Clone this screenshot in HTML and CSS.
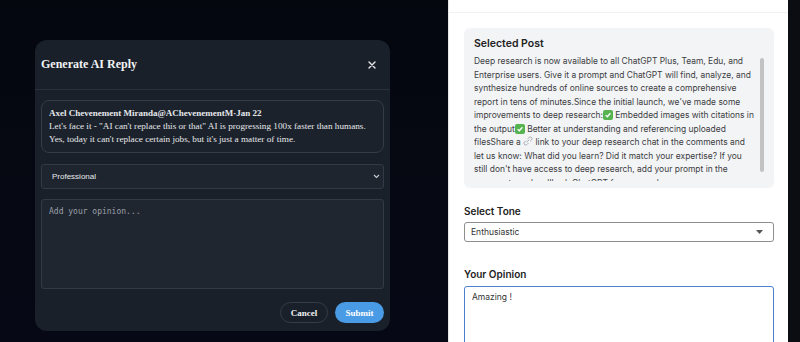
FILE: index.html
```html
<!DOCTYPE html>
<html lang="en">
<head>
<meta charset="utf-8">
<title>Generate AI Reply</title>
<link rel="stylesheet" href="styles.css">
</head>
<body>
<div class="page">
  <div class="backdrop">
    <div class="modal">
      <div class="modal-header">
        <h2 class="modal-title">Generate AI Reply</h2>
        <button class="close-btn" aria-label="Close">
          <svg width="8" height="8" viewBox="0 0 8 8"><path d="M1 1L7 7M7 1L1 7" stroke="#e8eaed" stroke-width="1.4" stroke-linecap="round"/></svg>
        </button>
      </div>
      <div class="modal-body">
        <div class="tweet">
          <div class="tweet-meta">Axel Chevenement Miranda@AChevenementM·Jan 22</div>
          <p class="tweet-text">Let's face it - "AI can't replace this or that" AI is progressing 100x faster than humans. Yes, today it can't replace certain jobs, but it's just a matter of time.</p>
        </div>
        <div class="dark-select">
          <span>Professional</span>
          <svg width="7" height="5" viewBox="0 0 7 5"><path d="M1 1L3.5 3.5L6 1" fill="none" stroke="#c9ccd1" stroke-width="1.1"/></svg>
        </div>
        <div class="dark-textarea">Add your opinion...</div>
        <div class="actions">
          <button class="btn btn-cancel">Cancel</button>
          <button class="btn btn-submit">Submit</button>
        </div>
      </div>
    </div>
  </div>
  <aside class="panel">
    <div class="panel-top"></div>
    <section class="post-card">
      <h3 class="post-title">Selected Post</h3>
      <div class="post-body">
        <div class="post-text">Deep research is now available to all ChatGPT Plus, Team, Edu, and<br>Enterprise users. Give it a prompt and ChatGPT will find, analyze, and<br>synthesize hundreds of online sources to create a comprehensive<br>report in tens of minutes.Since the initial launch, we've made some<br>improvements to deep research:<span class="check"><svg width="8" height="8" viewBox="0 0 8 8"><path d="M1.6 4.1L3.3 5.7L6.4 2.2" fill="none" stroke="#fff" stroke-width="1.3"/></svg></span> Embedded images with citations in<br>the output<span class="check"><svg width="8" height="8" viewBox="0 0 8 8"><path d="M1.6 4.1L3.3 5.7L6.4 2.2" fill="none" stroke="#fff" stroke-width="1.3"/></svg></span> Better at understanding and referencing uploaded<br>filesShare a <svg class="link" width="10" height="10" viewBox="0 0 10 10"><path d="M4 6L6 4M4.8 2.7L6 1.5a1.7 1.7 0 0 1 2.5 2.5L7.3 5.2M5.2 7.3L4 8.5a1.7 1.7 0 0 1-2.5-2.5L2.7 4.8" fill="none" stroke="#a0a4aa" stroke-width="0.9" stroke-linecap="round"/></svg> link to your deep research chat in the comments and<br>let us know: What did you learn? Did it match your expertise? If you<br>still don't have access to deep research, add your prompt in the<br>comments and we'll ask ChatGPT for you — plus more.</div>
        <div class="scroll-track"><div class="scroll-thumb"></div></div>
      </div>
    </section>
    <div class="field-label">Select Tone</div>
    <div class="light-select">
      <span>Enthusiastic</span>
      <svg width="7" height="4" viewBox="0 0 7 4"><path d="M0 0H7L3.5 4Z" fill="#555"/></svg>
    </div>
    <div class="field-label opinion-label">Your Opinion</div>
    <div class="light-textarea">Amazing !</div>
  </aside>
  <div class="edge"></div>
</div>
</body>
</html>
```

FILE: styles.css
```css
* { box-sizing: border-box; }
html, body { margin: 0; padding: 0; }
body {
  width: 800px;
  height: 342px;
  overflow: hidden;
  background: #060812;
}
.page {
  display: flex;
  height: 342px;
}
.backdrop {
  width: 448px;
  flex: none;
  background: linear-gradient(180deg, #05070f 0%, #060915 100%);
  padding: 40px 0 0 35px;
}
.modal {
  width: 355px;
  height: 291px;
  background: #1a2029;
  border-radius: 12px;
  display: flex;
  flex-direction: column;
}
.modal-header {
  height: 51px;
  border-bottom: 1px solid #29313b;
  display: flex;
  align-items: center;
  justify-content: space-between;
  padding: 0 13px 0 6px;
}
.modal-title {
  margin: 0;
  font-family: "Liberation Serif", serif;
  font-weight: 700;
  font-size: 12px;
  color: #f1f3f5;
}
.close-btn {
  background: none;
  border: 0;
  padding: 0;
  width: 10px;
  height: 10px;
  display: flex;
  align-items: center;
  justify-content: center;
}
.modal-body {
  padding: 10px 6px 8px;
  display: flex;
  flex-direction: column;
}
.tweet {
  border: 1px solid #343c47;
  border-radius: 8px;
  padding: 6px 7px;
  background: #1c222b;
  font-family: "Liberation Serif", serif;
  color: #e6e8eb;
}
.tweet-meta {
  font-weight: 700;
  font-size: 9px;
  line-height: 13px;
}
.tweet-text {
  margin: 0;
  font-size: 9.2px;
  line-height: 13px;
}
.dark-select {
  margin-top: 11px;
  height: 25px;
  border: 1px solid #323a45;
  border-radius: 3px;
  background: #1f252e;
  display: flex;
  align-items: center;
  justify-content: space-between;
  padding: 0 3px 0 10px;
  font-family: "Liberation Sans", Arial, sans-serif;
  font-size: 8px;
  color: #e8eaed;
}
.dark-textarea {
  margin-top: 10px;
  height: 90px;
  border: 1px solid #323a45;
  border-radius: 3px;
  background: #202630;
  padding: 7px 7px;
  font-family: "DejaVu Sans Mono", "Liberation Mono", monospace;
  font-size: 8px;
  line-height: 10px;
  color: #9aa0a8;
}
.actions {
  margin-top: 13px;
  display: flex;
  justify-content: flex-end;
  gap: 7px;
}
.btn {
  height: 21px;
  border-radius: 11px;
  font-family: "Liberation Serif", serif;
  font-weight: 700;
  font-size: 9px;
  padding: 0;
  color: #f1f3f5;
}
.btn-cancel {
  width: 48px;
  background: transparent;
  border: 1px solid #353d48;
}
.btn-submit {
  width: 49px;
  background: #4a9be6;
  border: 0;
  color: #fff;
}
.panel {
  width: 340px;
  flex: none;
  background: #ffffff;
  border-left: 1px solid #e4e6ea;
  padding: 0 14px 0 15px;
  font-family: Inter, "Noto Sans", sans-serif;
}
.panel-top {
  height: 13px;
  border-bottom: 1px solid #eef0f2;
  margin: 0 -14px 0 -15px;
}
.post-card {
  margin-top: 15px;
  background: #f3f4f6;
  border-radius: 6px;
  padding: 10px 10px 7px;
}
.post-title {
  margin: 0 0 5px;
  font-size: 10.5px;
  line-height: 12px;
  font-weight: 600;
  color: #222;
}
.post-body {
  display: flex;
  gap: 1px;
  height: 126px;
}
.post-text {
  flex: 1;
  overflow: hidden;
  font-size: 8.45px;
  line-height: 13.5px;
  color: #3b3d42;
}
.scroll-track {
  width: 4px;
  flex: none;
  padding-top: 3px;
}
.scroll-thumb {
  height: 114px;
  background: #c2c2c2;
  border-radius: 2px;
}
.check {
  display: inline-flex;
  align-items: center;
  justify-content: center;
  width: 10px;
  height: 10px;
  background: #56b34f;
  border-radius: 2px;
  vertical-align: -1px;
}
.link { vertical-align: -1px; }
.field-label {
  margin-top: 17px;
  font-size: 10px;
  line-height: 12px;
  font-weight: 600;
  color: #222;
}
.light-select {
  margin-top: 5px;
  height: 20px;
  border: 1px solid #8e8e8e;
  border-radius: 3px;
  display: flex;
  align-items: center;
  justify-content: space-between;
  padding: 0 10px 0 6px;
  font-size: 8.5px;
  color: #333;
}
.opinion-label { margin-top: 26px; }
.light-textarea {
  margin-top: 6px;
  height: 70px;
  border: 1.5px solid #4b80cf;
  border-radius: 3px;
  padding: 5px 7px;
  font-size: 8.5px;
  color: #333;
}
.edge {
  flex: 1;
  background: #0b0d12;
}
```
